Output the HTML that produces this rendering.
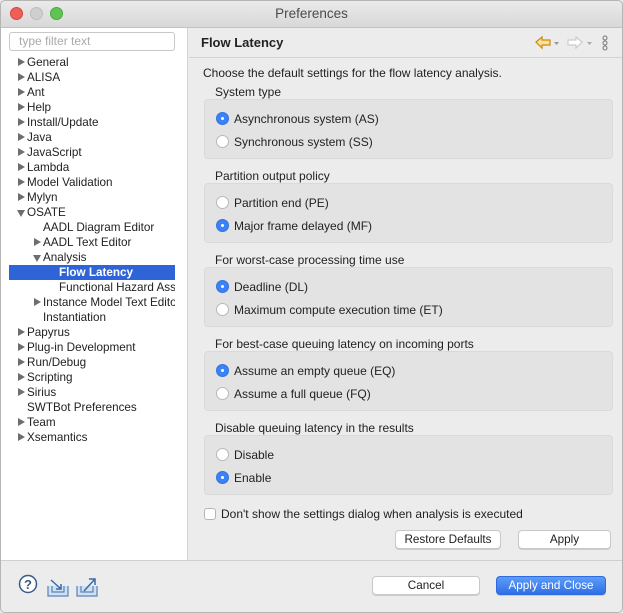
<!DOCTYPE html>
<html><head><meta charset="utf-8"><style>
*{box-sizing:border-box;margin:0;padding:0}
body{width:623px;height:613px;background:#fff;font-family:"Liberation Sans",sans-serif;font-size:12px;color:#222;position:relative;overflow:hidden}
.win{position:absolute;left:0;top:0;width:623px;height:613px;background:#ececec;overflow:hidden}
.frame{position:absolute;left:0;top:0;width:623px;height:613px;border:1px solid #b5b5b5;border-radius:5px}
.title{position:absolute;left:0;top:0;width:623px;height:28px;background:linear-gradient(#ebebeb,#d8d8d8);border-bottom:1px solid #c2c2c2;text-align:center;line-height:28px;font-size:13.5px;color:#4a4a4a}
.dot{position:absolute;top:7px;width:13px;height:13px;border-radius:50%}
.left{position:absolute;left:1px;top:28px;width:187px;height:532px;background:#fff;border-right:1px solid #d5d5d5}
.filter{position:absolute;left:9px;top:32px;width:166px;height:19px;border:1px solid #c8c8c8;border-radius:3px;background:#fff;color:#aaa;font-size:12px;line-height:17px;padding-left:9px}
.t{position:absolute;height:15px;line-height:15px;font-size:11.7px;white-space:nowrap;color:#222}
.ar{position:absolute;width:0;height:0;border-top:4.5px solid transparent;border-bottom:4.5px solid transparent;border-left:7px solid #6e6e6e}
.ad{position:absolute;width:0;height:0;border-left:4.5px solid transparent;border-right:4.5px solid transparent;border-top:7px solid #6e6e6e}
.sel{position:absolute;left:9px;top:265px;width:166px;height:15px;background:#2e64d8}
.hdr{position:absolute;left:189px;top:28px;width:433px;height:30px;border-bottom:1px solid #d2d2d2}
.txt{position:absolute;white-space:nowrap;line-height:14px}
.grp{position:absolute;left:204px;width:409px;height:60px;background:#e3e3e3;border:1px solid #dadada;border-radius:4px}
.rad{position:absolute;left:216px;width:13px;height:13px;border-radius:50%;background:#fff;border:1px solid #b8b8b8}
.rad.on{background:#3b82f6;border-color:#3272e0}
.rad.on::after{content:"";position:absolute;left:4px;top:4px;width:3px;height:3px;border-radius:50%;background:#fff}
.btn{position:absolute;height:19px;background:#fff;border:1px solid #c9c9c9;border-radius:4px;text-align:center;line-height:18px;font-size:11.7px;box-shadow:0 1px 0 #ccc}
</style></head><body><div class="win">
<div class="title">Preferences
<div class="dot" style="left:10px;background:#ee5f57;border:1px solid #d9443d"></div>
<div class="dot" style="left:30px;background:#cfcfcf;border:1px solid #bdbdbd"></div>
<div class="dot" style="left:50px;background:#5fc453;border:1px solid #47ab3b"></div>
</div>
<div class="left"></div>
<div class="filter">type filter text</div>
<div class="sel"></div>
<div class="ar" style="left:18px;top:58px"></div><div class="t" style="left:27px;top:55px">General</div>
<div class="ar" style="left:18px;top:73px"></div><div class="t" style="left:27px;top:70px">ALISA</div>
<div class="ar" style="left:18px;top:88px"></div><div class="t" style="left:27px;top:85px">Ant</div>
<div class="ar" style="left:18px;top:103px"></div><div class="t" style="left:27px;top:100px">Help</div>
<div class="ar" style="left:18px;top:118px"></div><div class="t" style="left:27px;top:115px">Install/Update</div>
<div class="ar" style="left:18px;top:133px"></div><div class="t" style="left:27px;top:130px">Java</div>
<div class="ar" style="left:18px;top:148px"></div><div class="t" style="left:27px;top:145px">JavaScript</div>
<div class="ar" style="left:18px;top:163px"></div><div class="t" style="left:27px;top:160px">Lambda</div>
<div class="ar" style="left:18px;top:178px"></div><div class="t" style="left:27px;top:175px">Model Validation</div>
<div class="ar" style="left:18px;top:193px"></div><div class="t" style="left:27px;top:190px">Mylyn</div>
<div class="ad" style="left:17px;top:210px"></div><div class="t" style="left:27px;top:205px">OSATE</div>
<div class="t" style="left:43px;top:220px">AADL Diagram Editor</div>
<div class="ar" style="left:34px;top:238px"></div><div class="t" style="left:43px;top:235px">AADL Text Editor</div>
<div class="ad" style="left:33px;top:255px"></div><div class="t" style="left:43px;top:250px">Analysis</div>
<div class="t" style="left:59px;top:265px;color:#fff;font-weight:bold">Flow Latency</div>
<div class="t" style="left:59px;top:280px;width:116px;overflow:hidden">Functional Hazard Assessment</div>
<div class="ar" style="left:34px;top:298px"></div><div class="t" style="left:43px;top:295px;width:132px;overflow:hidden">Instance Model Text Editor</div>
<div class="t" style="left:43px;top:310px">Instantiation</div>
<div class="ar" style="left:18px;top:328px"></div><div class="t" style="left:27px;top:325px">Papyrus</div>
<div class="ar" style="left:18px;top:343px"></div><div class="t" style="left:27px;top:340px">Plug-in Development</div>
<div class="ar" style="left:18px;top:358px"></div><div class="t" style="left:27px;top:355px">Run/Debug</div>
<div class="ar" style="left:18px;top:373px"></div><div class="t" style="left:27px;top:370px">Scripting</div>
<div class="ar" style="left:18px;top:388px"></div><div class="t" style="left:27px;top:385px">Sirius</div>
<div class="t" style="left:27px;top:400px">SWTBot Preferences</div>
<div class="ar" style="left:18px;top:418px"></div><div class="t" style="left:27px;top:415px">Team</div>
<div class="ar" style="left:18px;top:433px"></div><div class="t" style="left:27px;top:430px">Xsemantics</div>

<div class="hdr"></div>
<div class="txt" style="left:201px;top:36px;font-size:13px;font-weight:bold">Flow Latency</div>
<svg style="position:absolute;left:534px;top:34px" width="80" height="18">
<path d="M2 8 L8 3 L8 6 L16 6 L16 11 L8 11 L8 14 Z" fill="#fbe29a" stroke="#c98a12" stroke-width="1.2"/>
<path d="M20 8 l5 0 l-2.5 3z" fill="#999"/>
<path d="M48 8 L42 3 L42 6 L34 6 L34 11 L42 11 L42 14 Z" fill="#fff" stroke="#ccc" stroke-width="1.2"/>
<path d="M53 8 l5 0 l-2.5 3z" fill="#aaa"/>
<circle cx="71" cy="4" r="2" fill="none" stroke="#777"/><circle cx="71" cy="9" r="2" fill="none" stroke="#777"/><circle cx="71" cy="14" r="2" fill="none" stroke="#777"/>
</svg>
<div class="txt" style="left:203px;top:66px">Choose the default settings for the flow latency analysis.</div>

<div class="txt" style="left:215px;top:85px">System type</div>
<div class="grp" style="top:99px"></div>
<div class="rad on" style="top:112px"></div><div class="txt" style="left:234px;top:112px">Asynchronous system (AS)</div>
<div class="rad" style="top:135px"></div><div class="txt" style="left:234px;top:135px">Synchronous system (SS)</div>

<div class="txt" style="left:215px;top:169px">Partition output policy</div>
<div class="grp" style="top:183px"></div>
<div class="rad" style="top:196px"></div><div class="txt" style="left:234px;top:196px">Partition end (PE)</div>
<div class="rad on" style="top:219px"></div><div class="txt" style="left:234px;top:219px">Major frame delayed (MF)</div>

<div class="txt" style="left:215px;top:253px">For worst-case processing time use</div>
<div class="grp" style="top:267px"></div>
<div class="rad on" style="top:280px"></div><div class="txt" style="left:234px;top:280px">Deadline (DL)</div>
<div class="rad" style="top:303px"></div><div class="txt" style="left:234px;top:303px">Maximum compute execution time (ET)</div>

<div class="txt" style="left:215px;top:337px">For best-case queuing latency on incoming ports</div>
<div class="grp" style="top:351px"></div>
<div class="rad on" style="top:364px"></div><div class="txt" style="left:234px;top:364px">Assume an empty queue (EQ)</div>
<div class="rad" style="top:387px"></div><div class="txt" style="left:234px;top:387px">Assume a full queue (FQ)</div>

<div class="txt" style="left:215px;top:421px">Disable queuing latency in the results</div>
<div class="grp" style="top:435px"></div>
<div class="rad" style="top:448px"></div><div class="txt" style="left:234px;top:448px">Disable</div>
<div class="rad on" style="top:471px"></div><div class="txt" style="left:234px;top:471px">Enable</div>

<div style="position:absolute;left:204px;top:508px;width:12px;height:12px;border:1px solid #b5b5b5;border-radius:3px;background:#fff"></div>
<div class="txt" style="left:221px;top:507px">Don't show the settings dialog when analysis is executed</div>
<div class="btn" style="left:395px;top:530px;width:106px">Restore Defaults</div>
<div class="btn" style="left:518px;top:530px;width:93px">Apply</div>

<div style="position:absolute;left:0;top:560px;width:623px;height:1px;background:#d0d0d0"></div>
<svg style="position:absolute;left:16px;top:574px" width="90" height="24">
<circle cx="12" cy="10" r="8.5" fill="#fff" stroke="#3b5a85" stroke-width="1.5"/>
<text x="12" y="15" font-family="Liberation Sans" font-size="13" font-weight="bold" text-anchor="middle" fill="#3b5a85">?</text>
<path d="M32 12 L32 22 L52 22 L52 12 M36 12 L36 18 L48 18 L48 12" fill="#cfe0f3" stroke="#5b82b4" stroke-width="1.2"/>
<path d="M35 6 L45 15 M45 10 L45 15 L40 15" fill="none" stroke="#3b6aa6" stroke-width="1.5"/>
<path d="M61 12 L61 22 L81 22 L81 12 M65 12 L65 18 L77 18 L77 12" fill="#cfe0f3" stroke="#5b82b4" stroke-width="1.2"/>
<path d="M68 17 L79 5 M73 5 L79 5 L79 11" fill="none" stroke="#3b6aa6" stroke-width="1.5"/>
</svg>
<div class="btn" style="left:372px;top:576px;width:108px">Cancel</div>
<div class="btn" style="left:496px;top:576px;width:110px;background:linear-gradient(#5d9cf8,#2f6fe6);border-color:#2e6be0;color:#fff">Apply and Close</div>
<div class="frame"></div>
</div></body></html>
